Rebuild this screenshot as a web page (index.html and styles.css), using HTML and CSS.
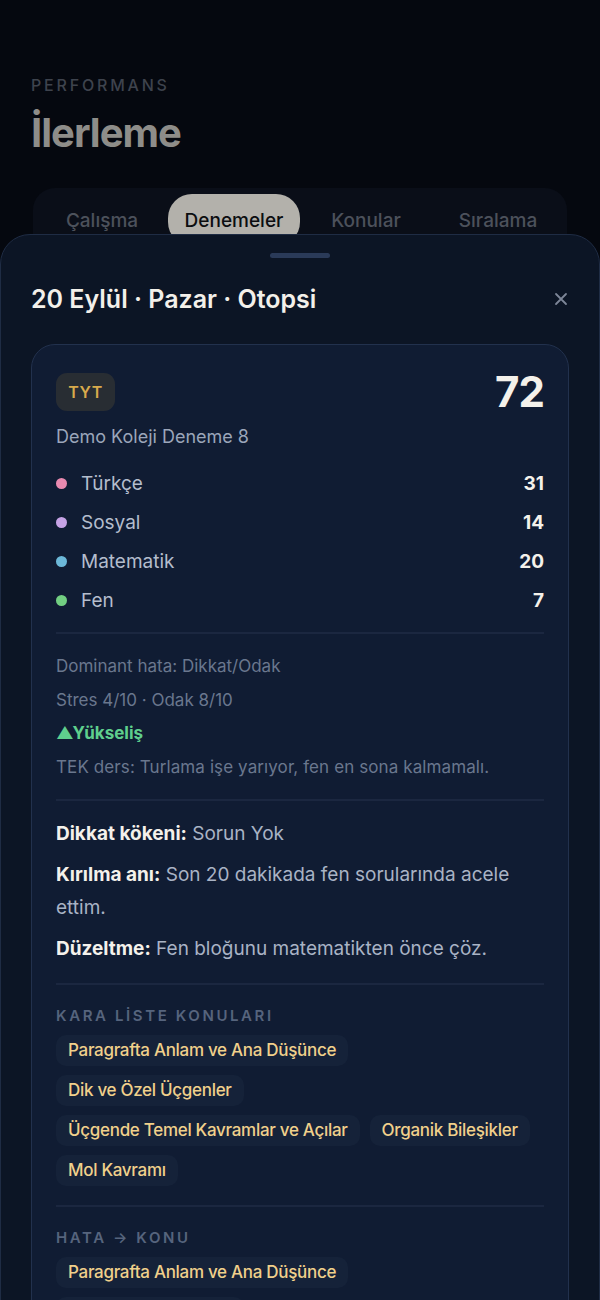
FILE: index.html
```html
<!DOCTYPE html>
<html lang="tr">
<head>
<meta charset="utf-8">
<link rel="stylesheet" href="styles.css">
</head>
<body>
<div class="page">
  <header class="head">
    <div class="eyebrow">PERFORMANS</div>
    <h1 class="title">İlerleme</h1>
    <nav class="tabs">
      <div class="tab">Çalışma</div>
      <div class="tab active">Denemeler</div>
      <div class="tab">Konular</div>
      <div class="tab">Sıralama</div>
    </nav>
  </header>

  <section class="sheet">
    <div class="handle"></div>
    <div class="sheet-head">
      <h2 class="sheet-title">20 Eylül · Pazar · Otopsi</h2>
      <svg class="close" width="14" height="14" viewBox="0 0 14 14"><path d="M2 2L12 12M12 2L2 12" stroke="#7d8698" stroke-width="1.8" stroke-linecap="round"/></svg>
    </div>

    <div class="card">
      <div class="card-top">
        <span class="badge">TYT</span>
        <span class="score">72</span>
      </div>
      <div class="exam-name">Demo Koleji Deneme 8</div>
      <ul class="subjects">
        <li><span class="dot pink"></span><span class="sub-name">Türkçe</span><span class="sub-val">31</span></li>
        <li><span class="dot purple"></span><span class="sub-name">Sosyal</span><span class="sub-val">14</span></li>
        <li><span class="dot blue"></span><span class="sub-name">Matematik</span><span class="sub-val">20</span></li>
        <li><span class="dot green"></span><span class="sub-name">Fen</span><span class="sub-val">7</span></li>
      </ul>

      <div class="divider"></div>

      <div class="notes">
        <p class="muted">Dominant hata: Dikkat/Odak</p>
        <p class="muted">Stres 4/10 · Odak 8/10</p>
        <p class="trend">▲Yükseliş</p>
        <p class="muted small">TEK ders: Turlama işe yarıyor, fen en sona kalmamalı.</p>
      </div>

      <div class="divider"></div>

      <div class="facts">
        <p><b>Dikkat kökeni:</b> Sorun Yok</p>
        <p><b>Kırılma anı:</b> Son 20 dakikada fen sorularında acele ettim.</p>
        <p><b>Düzeltme:</b> Fen bloğunu matematikten önce çöz.</p>
      </div>

      <div class="divider"></div>

      <div class="group first">
        <div class="label">KARA LİSTE KONULARI</div>
        <div class="chips">
          <span class="chip">Paragrafta Anlam ve Ana Düşünce</span>
          <span class="chip">Dik ve Özel Üçgenler</span>
          <span class="chip">Üçgende Temel Kavramlar ve Açılar</span>
          <span class="chip">Organik Bileşikler</span>
          <span class="chip">Mol Kavramı</span>
        </div>
      </div>

      <div class="divider"></div>

      <div class="group">
        <div class="label">HATA → KONU</div>
        <div class="chips">
          <span class="chip">Paragrafta Anlam ve Ana Düşünce</span>
          <span class="chip">Dik ve Özel Üçgenler</span>
        </div>
      </div>
    </div>
  </section>
</div>
</body>
</html>
```

FILE: styles.css
```css
* { box-sizing: border-box; }
html, body { margin: 0; padding: 0; }
body {
  background: #05080f;
  width: 600px;
  height: 1300px;
  overflow: hidden;
  font-family: Inter, "Noto Sans", sans-serif;
}
.page { position: relative; height: 1300px; }

.head { padding: 75px 33px 0 33px; }
.eyebrow {
  font-size: 16px;
  letter-spacing: 2.8px;
  color: #3e434d;
  font-weight: 500;
  margin-left: -2px;
  line-height: 20px;
}
.title {
  margin: 14px 0 0 -2px;
  font-family: Inter, "Liberation Sans", sans-serif;
  font-size: 40px;
  font-weight: 700;
  letter-spacing: -1px;
  color: #8e8d89;
  line-height: 48px;
}
.tabs {
  margin-top: 31px;
  display: grid;
  grid-template-columns: repeat(4, 1fr);
  background: #0a0e18;
  border-radius: 22px;
  padding: 6px 3px;
  height: 70px;
}
.tab {
  height: 52px;
  display: flex;
  align-items: flex-start;
  padding-top: 15px;
  justify-content: center;
  font-size: 19px;
  font-weight: 500;
  line-height: 23px;
  color: #4c515b;
  border-radius: 24px;
}
.tab.active { background: #b3b1ab; color: #0b0d10; }

.sheet {
  position: absolute;
  left: 0; right: 0; top: 234px; bottom: -40px;
  background: #0c1525;
  border: 1px solid #1f2c44;
  border-radius: 30px 30px 0 0;
  padding: 0 30px;
}
.handle {
  width: 60px; height: 5px;
  border-radius: 3px;
  background: #2a3a58;
  margin: 18px auto 0;
}
.sheet-head {
  display: flex;
  align-items: center;
  justify-content: space-between;
  margin-top: 25px;
}
.sheet-title {
  margin: 0;
  font-size: 25px;
  font-weight: 600;
  color: #f3f0ea;
  line-height: 32px;
}
.close { margin-right: 1px; }

.card {
  margin-top: 29px;
  background: #101c33;
  border: 1px solid #22314d;
  border-radius: 24px;
  padding: 27px 24px 40px;
}
.card-top { display: flex; justify-content: space-between; align-items: center; height: 40px; }
.badge {
  display: inline-flex; align-items: center; justify-content: center;
  width: 59px; height: 38px;
  border-radius: 11px;
  background: #282d33;
  color: #d8aa4c;
  font-weight: 600;
  font-size: 16px;
  letter-spacing: 0.5px;
}
.score {
  font-size: 42px;
  font-weight: 700;
  color: #f4f1eb;
  line-height: 40px;
  letter-spacing: -1px;
}
.exam-name {
  margin-top: 13px;
  font-size: 18px;
  color: #9ba6ba;
  line-height: 24px;
}
.subjects { list-style: none; margin: 0; padding: 15px 0 12px; }
.subjects li {
  display: flex; align-items: center;
  height: 39px;
}
.dot { width: 11px; height: 11px; border-radius: 50%; margin-right: 14px; }
.pink { background: #e98ab0; }
.purple { background: #c6a3e6; }
.blue { background: #6cb8d9; }
.green { background: #72cf82; }
.sub-name { font-size: 19px; color: #b4bdcd; flex: 1; }
.sub-val { font-size: 19px; font-weight: 700; color: #f4f1eb; }

.divider { height: 2px; background: #1b2740; }

.notes { padding: 16px 0 15px; }
.notes p { margin: 0; line-height: 33.5px; font-size: 17px; }
.muted { color: #6a778e; }
.notes .small { letter-spacing: 0.1px; }
.trend { color: #5fcf8d; font-weight: 700; }

.facts { padding: 16px 0 18px; }
.facts p { margin: 0 0 8px; font-size: 19px; line-height: 33px; color: #a9b3c5; }
.facts p:last-child { margin-bottom: 0; }
.facts b { color: #f4f1eb; font-weight: 700; }

.group { padding: 21px 0 19px; }
.group.first { padding-top: 21px; }
.label {
  font-size: 15px;
  font-weight: 600;
  letter-spacing: 2.6px;
  color: #56647d;
  line-height: 20px;
}
.chips { display: flex; flex-wrap: wrap; gap: 9px 10px; margin-top: 9px; }
.chip {
  background: #152239;
  border-radius: 10px;
  padding: 0 12px;
  height: 31px;
  line-height: 31px;
  font-size: 17px;
  font-weight: 500;
  letter-spacing: -0.3px;
  color: #f0d08b;
  white-space: nowrap;
}
```
